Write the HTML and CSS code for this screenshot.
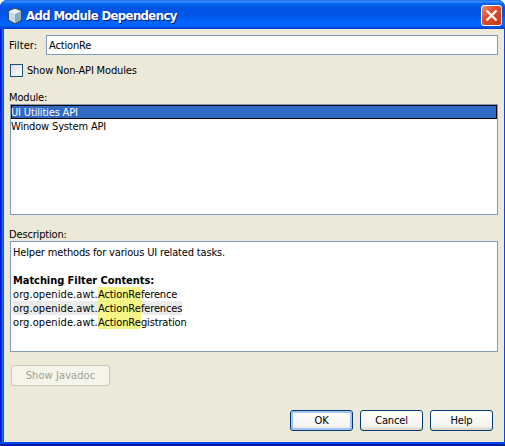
FILE: index.html
```html
<!DOCTYPE html>
<html lang="en">
<head>
<meta charset="utf-8">
<title>Add Module Dependency</title>
<link rel="stylesheet" href="styles.css">
</head>
<body>
<div class="window">
  <header class="titlebar">
    <svg class="cube" width="16" height="18" viewBox="0 0 16 18">
      <path d="M8 1 14.5 3.7V13.2L8 16.8 1.5 13.2V3.7Z" fill="#eef5f8" stroke="#35506e" stroke-width="1.4" stroke-linejoin="round"/>
      <path d="M2.2 4.4 8 6.8V16L2.2 12.8Z" fill="#c5dce4"/>
      <path d="M13.8 4.4 8 6.8V16L13.8 12.8Z" fill="#8eabbc"/>
      <path d="M8 1.8 13.8 4.2 8 6.7 2.2 4.2Z" fill="#e4f0f3"/>
    </svg>
    <h1 class="title">Add Module Dependency</h1>
    <svg class="close" width="21" height="21" viewBox="0 0 21 21">
      <defs><linearGradient id="red" x1="0" y1="0" x2="1" y2="1"><stop offset="0" stop-color="#ee9277"/><stop offset=".4" stop-color="#df5030"/><stop offset="1" stop-color="#c33311"/></linearGradient></defs>
      <rect x=".5" y=".5" width="20" height="20" rx="2.5" fill="url(#red)" stroke="#fff"/>
      <path d="M5.5 5.5 15.5 15.5M15.5 5.5 5.5 15.5" stroke="#fff" stroke-width="2.3"/>
    </svg>
  </header>
  <main class="content">
    <div class="filter"><span class="label filter-label">Filter:</span><div class="field">ActionRe</div></div>
    <div class="option"><span class="checkbox"></span><span>Show Non-API Modules</span></div>
    <div class="label module-label">Module:</div>
    <div class="box list">
      <div class="row selected">UI Utilities API</div>
      <div class="row">Window System API</div>
    </div>
    <div class="label description-label">Description:</div>
    <div class="box description">
      <div class="line">Helper methods for various UI related tasks.</div>
      <div class="line"></div>
      <div class="line"><b class="heading">Matching Filter Contents:</b></div>
      <div class="line match"><span class="package">org.openide.awt.</span><mark>ActionRe</mark><span>ference</span></div>
      <div class="line match shaded"><span class="package">org.openide.awt.</span><mark>ActionRe</mark><span>ferences</span></div>
      <div class="line match"><span class="package">org.openide.awt.</span><mark>ActionRe</mark><span>gistration</span></div>
    </div>
    <div class="button disabled">Show Javadoc</div>
    <footer class="actions">
      <div class="button primary">OK</div>
      <div class="button">Cancel</div>
      <div class="button">Help</div>
    </footer>
  </main>
</div>
</body>
</html>
```
FILE: styles.css
```css
* { box-sizing: border-box; }
body { margin: 0; background: #fff; font: 11px/14px "DejaVu Sans Condensed", "DejaVu Sans", sans-serif; font-stretch: condensed; letter-spacing: -0.16px; color: #000; white-space: nowrap; }
.window { width: 505px; height: 446px; overflow: hidden; display: flex; flex-direction: column; border-radius: 7px 7px 0 0; background: linear-gradient(#0048f0 0 2px, #001ba8 2px) bottom / 100% 4px no-repeat, linear-gradient(90deg, #0019cf 0 1px, #0831d9 1px 2px, #166aee 2px 3px, #0855dd 3px 4px, #0048f0 4px); }
.titlebar { height: 29px; flex: none; display: flex; align-items: center; padding: 2px 3px 0 7px; background: linear-gradient(#0a5adc 0, #3c93ff 1px, #2d82f8 2px, #0563ef 4px, #0054e3 8px, #0055e5 15px, #0061fa 20px, #0066ff 25px, #0050e5 27px, #003dcc 29px); }
.title { margin: 0 auto 0 3px; padding-top: 1px; font: bold 13px/18px "DejaVu Sans Condensed", "DejaVu Sans", sans-serif; font-stretch: condensed; letter-spacing: -0.62px; color: #fff; text-shadow: 1px 1px 0 #0a1883; }
.content { height: 413px; margin: 0 1px 4px 4px; padding: 6px 6px 0; background: #ece9d8; display: flex; flex-direction: column; align-items: stretch; }
.filter { display: flex; height: 20px; align-items: center; }
.label { margin-left: -1px; height: 14px; line-height: 16px; }
.filter-label { width: 37px; letter-spacing: 0.1px; }
.field { flex: 1; height: 20px; padding: 2px; line-height: 16px; background: #fff; border: 1px solid #7f9db9; }
.option { display: flex; align-items: center; height: 13px; margin-top: 9px; gap: 4px; }
.checkbox { width: 13px; height: 13px; border: 1px solid #1c5180; background: linear-gradient(135deg, #dcdcd7, #fff); }
.module-label { margin-top: 13px; }
.box { flex: none; height: 111px; border: 1px solid #7f9db9; background: #fff; }
.row { height: 14px; line-height: 16px; }
.selected { background: #316ac5; color: #fff; box-shadow: inset 0 0 0 1px #000; }
.description-label { margin-top: 12px; }
.description { padding: 3px 2px; }
.line { height: 14px; line-height: 16px; }
.heading { letter-spacing: -0.06px; }
.match { display: flex; width: max-content; }
.shaded { background: #ebebeb; }
.package { width: 85px; letter-spacing: 0.08px; }
mark { width: 43px; background: #f5f587; color: #000; letter-spacing: -0.1px; }
.button { width: 63px; height: 21px; line-height: 19px; text-align: center; border: 1px solid #003c74; border-radius: 3px; background: linear-gradient(#fff, #f4f3ee 80%, #d9d3c6); }
.primary { box-shadow: inset 0 0 0 2px #a9c3f0; }
.disabled { width: 99px; margin: 13px 0 0 1px; color: #a1a192; border-color: #c9c7ba; background: #f5f4ea; letter-spacing: 0.08px; }
.actions { display: flex; justify-content: flex-end; gap: 7px; margin: 24px 5px 0 0; }
```
